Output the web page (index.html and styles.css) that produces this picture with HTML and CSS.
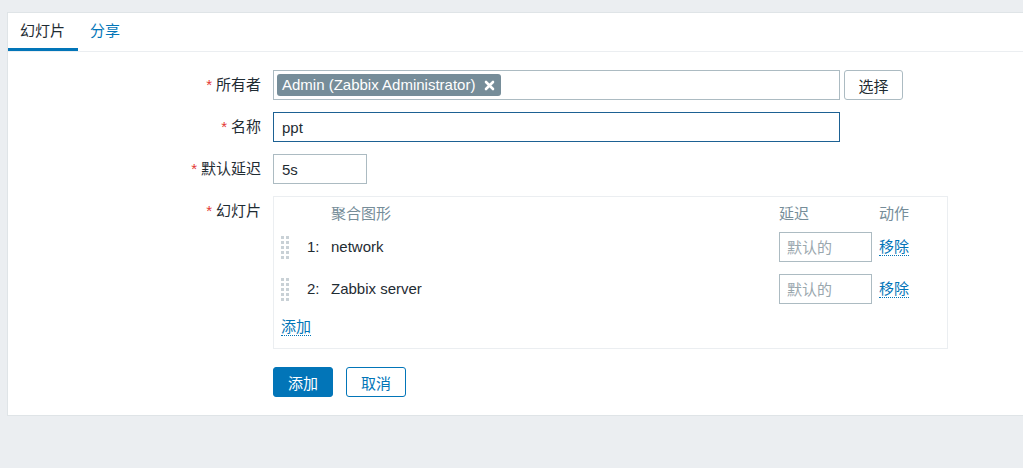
FILE: index.html
```html
<!DOCTYPE html>
<html lang="zh">
<head>
<meta charset="utf-8">
<title>幻灯片</title>
<link rel="stylesheet" href="styles.css">
</head>
<body>
<div class="panel">
  <div class="tabs">
    <span class="tab active">幻灯片</span>
    <span class="tab">分享</span>
  </div>
  <div class="form">
    <div class="label"><span class="ast">*</span>所有者</div>
    <div class="field row-owner">
      <div class="multiselect">
        <span class="tag">Admin (Zabbix Administrator)<svg class="tag-x" width="11" height="11" viewBox="0 0 11 11"><path d="M2 2 L9 9 M9 2 L2 9" stroke="#fff" stroke-width="2.6" stroke-linecap="round"/></svg></span>
      </div>
      <button class="btn-grey">选择</button>
    </div>

    <div class="label"><span class="ast">*</span>名称</div>
    <div class="field"><input class="input wide focused" type="text" value="ppt"></div>

    <div class="label"><span class="ast">*</span>默认延迟</div>
    <div class="field"><input class="input narrow" type="text" value="5s"></div>

    <div class="label"><span class="ast">*</span>幻灯片</div>
    <div class="field">
      <div class="slides">
        <div class="slides-grid">
          <div class="hd"></div>
          <div class="hd"></div>
          <div class="hd">聚合图形</div>
          <div class="hd">延迟</div>
          <div class="hd">动作</div>

          <div class="cell handle"><svg width="8" height="23" viewBox="0 0 8 23"><g fill="#c9d1d6"><rect x="0" y="0" width="3" height="3"/><rect x="5" y="0" width="3" height="3"/><rect x="0" y="5" width="3" height="3"/><rect x="5" y="5" width="3" height="3"/><rect x="0" y="10" width="3" height="3"/><rect x="5" y="10" width="3" height="3"/><rect x="0" y="15" width="3" height="3"/><rect x="5" y="15" width="3" height="3"/><rect x="0" y="20" width="3" height="3"/><rect x="5" y="20" width="3" height="3"/></g></svg></div>
          <div class="cell num">1:</div>
          <div class="cell">network</div>
          <div class="cell"><input class="input delay" type="text" placeholder="默认的"></div>
          <div class="cell"><a class="link">移除</a></div>

          <div class="cell handle second"><svg width="8" height="23" viewBox="0 0 8 23"><g fill="#c9d1d6"><rect x="0" y="0" width="3" height="3"/><rect x="5" y="0" width="3" height="3"/><rect x="0" y="5" width="3" height="3"/><rect x="5" y="5" width="3" height="3"/><rect x="0" y="10" width="3" height="3"/><rect x="5" y="10" width="3" height="3"/><rect x="0" y="15" width="3" height="3"/><rect x="5" y="15" width="3" height="3"/><rect x="0" y="20" width="3" height="3"/><rect x="5" y="20" width="3" height="3"/></g></svg></div>
          <div class="cell num second">2:</div>
          <div class="cell second">Zabbix server</div>
          <div class="cell second"><input class="input delay" type="text" placeholder="默认的"></div>
          <div class="cell second"><a class="link">移除</a></div>
        </div>
        <div class="add-row"><a class="link">添加</a></div>
      </div>
    </div>

    <div class="label"></div>
    <div class="field buttons">
      <button class="btn-primary">添加</button>
      <button class="btn-alt">取消</button>
    </div>
  </div>
</div>
</body>
</html>
```

FILE: styles.css
```css
* { box-sizing: border-box; }

html, body {
  margin: 0;
  padding: 0;
}

body {
  background: #ebeef1;
  font-family: "Liberation Sans", "Noto Sans CJK SC", Arial, sans-serif;
  font-size: 15px;
  color: #1f2c33;
  padding: 12px 0 0 7px;
  overflow: hidden;
}

.panel {
  background: #fff;
  border: 1px solid #dfe4e7;
  border-right: none;
  width: 1016px;
}

.tabs {
  display: flex;
  border-bottom: 1px solid #ebeef1;
}

.tab {
  padding: 8px 13px 7px 12px;
  line-height: 20px;
  border-bottom: 3px solid transparent;
  color: #0275b8;
}

.tab.active {
  color: #1f2c33;
  border-bottom-color: #0275b8;
}

.form {
  display: grid;
  grid-template-columns: 253px 1fr;
  column-gap: 12px;
  row-gap: 12px;
  padding: 18px 0 18px;
}

.label {
  text-align: right;
  line-height: 30px;
  white-space: nowrap;
}

.ast {
  color: #e33734;
  margin-right: 4px;
}

.field {
  display: flex;
  align-items: flex-start;
}

.multiselect {
  width: 567px;
  height: 30px;
  border: 1px solid #acbbc2;
  padding: 3px;
  display: flex;
  align-items: center;
}

.tag {
  display: inline-flex;
  align-items: center;
  height: 22px;
  background: #768d99;
  color: #fff;
  border-radius: 3px;
  padding: 0 6px 0 5px;
  line-height: 22px;
  white-space: nowrap;
}

.tag-x {
  margin-left: 9px;
}

.btn-grey {
  margin-left: 4px;
  width: 59px;
  height: 30px;
  background: #fff;
  border: 1px solid #acbbc2;
  border-radius: 3px;
  font: inherit;
  color: #1f2c33;
  padding: 0;
}

.input {
  height: 30px;
  border: 1px solid #acbbc2;
  padding: 0 8px;
  font: inherit;
  color: #1f2c33;
  background: #fff;
  outline: none;
}

.input.wide { width: 567px; }
.input.narrow { width: 94px; }
.input.focused { border-color: #1d6193; }

.input.delay {
  width: 93px;
  padding: 0 7px;
}

.input::placeholder {
  color: #9aa7ae;
}

.slides {
  width: 675px;
  border: 1px solid #ebeef1;
  padding: 7px 7px 11px;
}

.slides-grid {
  display: grid;
  grid-template-columns: 26px 24px 448px 100px 1fr;
  align-items: center;
}

.hd {
  color: #768d99;
  line-height: 20px;
  margin-bottom: 8px;
}

.cell {
  height: 30px;
  display: flex;
  align-items: center;
  line-height: 20px;
}

.cell.second {
  margin-top: 12px;
}

.link {
  color: #0275b8;
  line-height: 17px;
  border-bottom: 1px dotted #0275b8;
  display: inline-block;
  cursor: pointer;
}

.add-row {
  margin-top: 13px;
  line-height: 20px;
}

.buttons {
  margin-top: 6px;
  gap: 13px;
}

.btn-primary,
.btn-alt {
  height: 30px;
  width: 60px;
  border-radius: 3px;
  font: inherit;
  padding: 0;
}

.btn-primary {
  background: #0275b8;
  border: 1px solid #0275b8;
  color: #fff;
}

.btn-alt {
  background: #fff;
  border: 1px solid #0275b8;
  color: #0275b8;
}
```
